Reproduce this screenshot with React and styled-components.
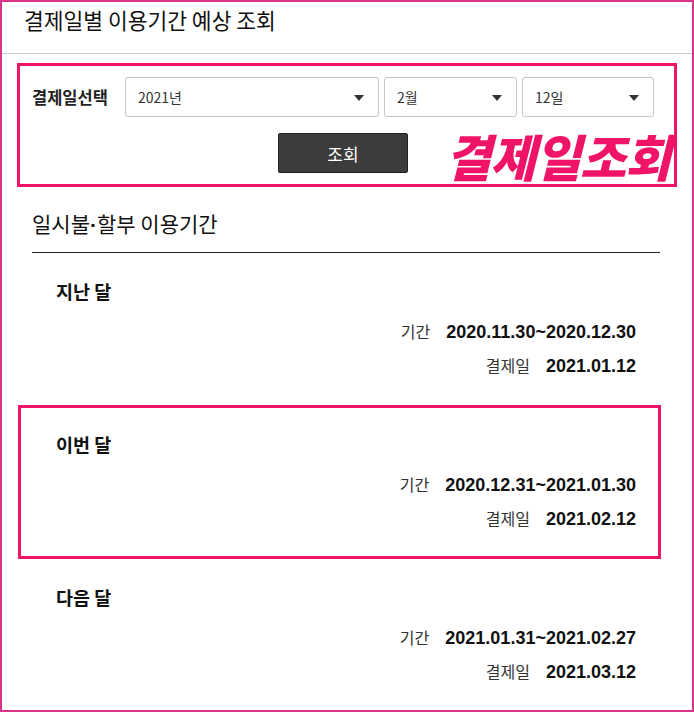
import React from 'react'
import styled, { createGlobalStyle } from 'styled-components'

const GlobalStyle = createGlobalStyle`
  html, body {
    margin: 0;
    padding: 0;
    background: #fff;
  }
  * {
    box-sizing: border-box;
  }
  body {
    font-family: 'Noto Sans CJK KR', 'Noto Sans', sans-serif;
    color: #111;
  }
`

const periods = [
  { title: '지난 달', range: '2020.11.30~2020.12.30', payDay: '2021.01.12' },
  { title: '이번 달', range: '2020.12.31~2021.01.30', payDay: '2021.02.12', marked: true },
  { title: '다음 달', range: '2021.01.31~2021.02.27', payDay: '2021.03.12' },
]

export default function App() {
  return (
    <>
      <GlobalStyle />
      <Page>
        <Header>
          <Title>결제일별 이용기간 예상 조회</Title>
        </Header>

        <SearchForm>
          <SelectRow>
            <FieldLabel>결제일선택</FieldLabel>
            <SelectBox>2021년</SelectBox>
            <SelectBox>2월</SelectBox>
            <SelectBox>12일</SelectBox>
          </SelectRow>
          <ButtonRow>
            <SearchButton type="button">조회</SearchButton>
          </ButtonRow>
          <Stamp>결제일조회</Stamp>
        </SearchForm>

        <Section>
          <SectionTitle>
            일시불<Dot>·</Dot>할부 이용기간
          </SectionTitle>
          {periods.map(p => (
            <PeriodItem key={p.title} marked={p.marked}>
              <PeriodTitle>{p.title}</PeriodTitle>
              <InfoRow>
                <InfoLabel>기간</InfoLabel>
                <InfoValue>{p.range}</InfoValue>
              </InfoRow>
              <InfoRow>
                <InfoLabel>결제일</InfoLabel>
                <InfoValue>{p.payDay}</InfoValue>
              </InfoRow>
            </PeriodItem>
          ))}
        </Section>
      </Page>
    </>
  )
}

const Page = styled.div`
  width: 694px;
  height: 712px;
  border: 2px solid #d6358a;
  overflow: hidden;
  background: #fff;
`

const Header = styled.div`
  height: 52px;
  padding: 4px 22px 0;
  border-bottom: 1px solid #c8c8c8;
`

const Title = styled.h1`
  margin: 0;
  font-size: 21.5px;
  line-height: 28px;
  font-weight: 400;
  color: #111;
`

const SearchForm = styled.div`
  position: relative;
  margin: 9px 15px 0;
  padding: 11px 20px 11px 12px;
  border: 3px solid #ef1468;
`

const SelectRow = styled.div`
  display: grid;
  grid-template-columns: 88px 254px 133px 1fr;
  column-gap: 5px;
  align-items: center;
`

const FieldLabel = styled.span`
  font-size: 16.5px;
  font-weight: 700;
  color: #222;
  white-space: nowrap;
`

const SelectBox = styled.div`
  position: relative;
  height: 40px;
  padding: 0 12px;
  display: flex;
  align-items: center;
  border: 1px solid #c4c4c4;
  border-radius: 3px;
  background: #fff;
  font-size: 14px;
  color: #333;

  &::after {
    content: '';
    position: absolute;
    right: 14px;
    top: 17px;
    border-left: 5px solid transparent;
    border-right: 5px solid transparent;
    border-top: 6px solid #333;
  }
`

const ButtonRow = styled.div`
  display: flex;
  justify-content: center;
  margin-top: 16px;
`

const SearchButton = styled.button`
  width: 130px;
  height: 40px;
  border: 1px solid #222;
  border-radius: 2px;
  background: #3c3c3c;
  color: #fff;
  font-family: 'Noto Sans CJK KR', sans-serif;
  font-size: 17px;
  cursor: pointer;
`

const Stamp = styled.div`
  position: absolute;
  right: 4px;
  bottom: 4px;
  font-size: 50px;
  line-height: 1;
  font-weight: 900;
  font-style: italic;
  color: #ef1468;
  letter-spacing: -1px;
`

const Section = styled.div`
  margin: 22px 32px 0 30px;
`

const SectionTitle = styled.h2`
  margin: 0;
  padding-bottom: 13px;
  border-bottom: 1px solid #222;
  font-size: 21px;
  line-height: 28px;
  font-weight: 400;
  color: #111;
`

const Dot = styled.span`
  font-family: 'Liberation Sans', sans-serif;
  font-weight: 700;
`

const PeriodItem = styled.div`
  position: relative;
  padding: 26px 24px 24px;

  &::after {
    content: '';
    display: ${p => (p.marked ? 'block' : 'none')};
    position: absolute;
    top: -1px;
    bottom: 0;
    left: -14px;
    right: -1px;
    border: 3px solid #ef1468;
    pointer-events: none;
  }
`

const PeriodTitle = styled.h3`
  margin: 0 0 11px;
  font-size: 18.5px;
  line-height: 24px;
  font-weight: 700;
  color: #111;
`

const InfoRow = styled.div`
  display: flex;
  justify-content: flex-end;
  align-items: baseline;
  height: 34px;
  line-height: 34px;
`

const InfoLabel = styled.span`
  font-size: 16px;
  color: #333;
`

const InfoValue = styled.span`
  margin-left: 16px;
  font-family: 'Liberation Sans', 'Noto Sans CJK KR', sans-serif;
  font-size: 18px;
  font-weight: 700;
  color: #111;
`
